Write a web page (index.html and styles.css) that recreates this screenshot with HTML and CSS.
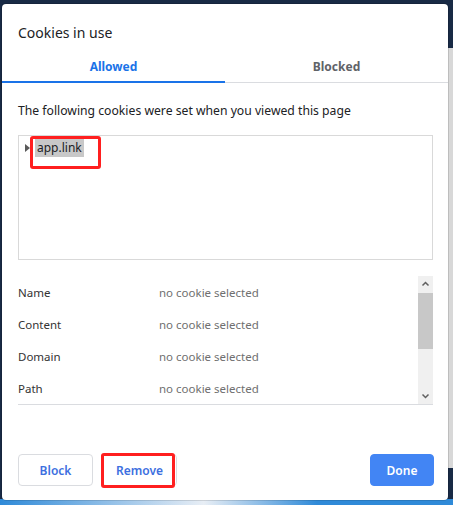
FILE: index.html
```html
<!DOCTYPE html>
<html lang="en">

<head>
    <meta charset="UTF-8">
    <meta name="viewport" content="width=device-width, initial-scale=1.0">
    <title>Cookies in use</title>
    <link rel="stylesheet" href="styles.css">
</head>

<body>
    <div class="desktop">
        <div class="dialog">
            <h1 class="dialog-title">Cookies in use</h1>

            <div class="tabs">
                <div class="tab active">Allowed</div>
                <div class="tab">Blocked</div>
            </div>

            <div class="dialog-body">
                <p class="intro">The following cookies were set when you viewed this page</p>

                <div class="tree">
                    <div class="tree-item">
                        <span class="twisty"></span>
                        <span class="site selected">app.link</span>
                    </div>
                    <span class="mark mark-site"></span>
                </div>

                <div class="details">
                    <div class="detail-rows">
                        <div class="detail-row">
                            <span class="detail-label">Name</span>
                            <span class="detail-value">no cookie selected</span>
                        </div>
                        <div class="detail-row">
                            <span class="detail-label">Content</span>
                            <span class="detail-value">no cookie selected</span>
                        </div>
                        <div class="detail-row">
                            <span class="detail-label">Domain</span>
                            <span class="detail-value">no cookie selected</span>
                        </div>
                        <div class="detail-row">
                            <span class="detail-label">Path</span>
                            <span class="detail-value">no cookie selected</span>
                        </div>
                    </div>
                    <div class="scrollbar">
                        <svg class="arrow" width="15" height="16" viewBox="0 0 15 16">
                            <path d="M4.5 9.5 L7.5 6.5 L10.5 9.5" fill="none" stroke="#606060" stroke-width="1.5" />
                        </svg>
                        <div class="thumb"></div>
                        <div class="track-rest"></div>
                        <svg class="arrow" width="15" height="16" viewBox="0 0 15 16">
                            <path d="M4.5 6.5 L7.5 9.5 L10.5 6.5" fill="none" stroke="#606060" stroke-width="1.5" />
                        </svg>
                    </div>
                </div>
            </div>

            <div class="dialog-actions">
                <button class="btn">Block</button>
                <div class="marked">
                    <button class="btn">Remove</button>
                    <span class="mark mark-button"></span>
                </div>
                <button class="btn btn-primary">Done</button>
            </div>
        </div>
    </div>
</body>

</html>
```

FILE: styles.css
```css
* {
    box-sizing: border-box;
    margin: 0;
    padding: 0;
}

body {
    font-family: 'Noto Sans', 'Open Sans', sans-serif;
    -webkit-font-smoothing: antialiased;
    background-color: #1b3050;
}

/* window behind the dialog: dark title strip, grey pane on the right, blue at the bottom */
.desktop {
    width: 453px;
    height: 505px;
    overflow: hidden;
    padding: 4px 0 0 2px;
    background-color: #182a45;
    background-image:
        linear-gradient(#d8d8d8, #d8d8d8),
        linear-gradient(to right, #2f8ad8, #e8eef5 45%, #2f8ad8 70%, #2f8ad8);
    background-size: 5px 420px, 100% 6px;
    background-position: 448px 48px, 0 499px;
    background-repeat: no-repeat;
}

.dialog {
    width: 446px;
    height: 496px;
    background-color: #fff;
    border-radius: 4px;
    box-shadow: 0 0 0 1px rgba(0, 0, 0, 0.12);
    display: flex;
    flex-direction: column;
}

.dialog-title {
    font-size: 14px;
    font-weight: 400;
    line-height: 20px;
    color: #202124;
    padding: 19px 16px 0;
    height: 48px;
}

.tabs {
    display: flex;
    border-bottom: 1px solid #dadce0;
}

.tab {
    flex: 1;
    text-align: center;
    font-size: 12px;
    font-weight: 700;
    color: #5f6368;
    height: 30px;
    line-height: 30px;
}

.tab.active {
    color: #1a73e8;
    border-bottom: 2px solid #1a73e8;
    margin-bottom: -1px;
    height: 31px;
    line-height: 29px;
}

.dialog-body {
    padding: 0 15px 0 16px;
}

.intro {
    font-size: 12.2px;
    color: #202124;
    line-height: 18px;
    margin-top: 19px;
}

.tree {
    position: relative;
    height: 125px;
    margin-top: 15px;
    border: 1px solid #d9d9d9;
    padding: 2px 0 0 4px;
}

.tree-item {
    display: flex;
    align-items: center;
    height: 19px;
}

.twisty {
    width: 0;
    height: 0;
    border-top: 4px solid transparent;
    border-bottom: 4px solid transparent;
    border-left: 5px solid #5a5a5a;
    margin: 0 5px 0 2px;
}

.site {
    font-size: 12px;
    color: #202124;
    padding: 0 2px;
    line-height: 19px;
}

.site.selected {
    background-color: #c8c8c8;
}

.mark {
    position: absolute;
    border: 3px solid #ff1f1f;
    border-radius: 3px;
}

.mark-site {
    left: 11px;
    top: 0;
    width: 71px;
    height: 33px;
}

.details {
    display: flex;
    margin-top: 16px;
    border-bottom: 1px solid #dadce0;
}

.detail-rows {
    flex: 1;
}

.detail-row {
    display: flex;
    align-items: center;
    height: 32px;
    font-size: 11.5px;
}

.detail-label {
    width: 141px;
    color: #333;
}

.detail-value {
    color: #6f6f6f;
}

.scrollbar {
    width: 15px;
    background-color: #f0f0f0;
    display: flex;
    flex-direction: column;
}

.arrow {
    display: block;
    flex: none;
}

.thumb {
    height: 56px;
    margin-top: 1px;
    background-color: #c8c8c8;
}

.track-rest {
    flex: 1;
}

.dialog-actions {
    margin-top: auto;
    display: flex;
    align-items: center;
    gap: 9px;
    padding: 0 14px 14px 16px;
}

.btn {
    font-family: inherit;
    font-size: 12px;
    font-weight: 600;
    height: 32px;
    width: 75px;
    color: #3d6fe0;
    background-color: #fff;
    border: 1px solid #dadce0;
    border-radius: 4px;
}

.marked {
    position: relative;
}

.mark-button {
    left: -1px;
    top: -1px;
    width: 74px;
    height: 35px;
}

.btn-primary {
    margin-left: auto;
    width: 64px;
    color: #fff;
    background-color: #4285f4;
    border-color: #4285f4;
}
```
